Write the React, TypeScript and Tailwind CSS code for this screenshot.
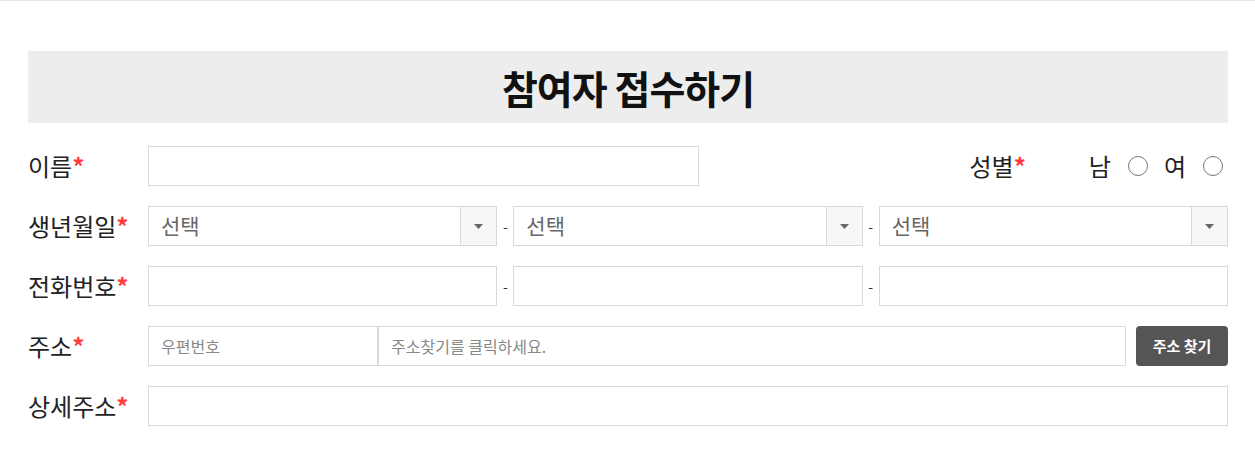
import React from "react";

const font = { fontFamily: '"Noto Sans CJK KR", "Noto Sans", sans-serif' };

function Label({ text }: { text: string }) {
  return (
    <div className="w-[120px] shrink-0 text-[24px] leading-none text-[#222]">
      {text}
      <span className="text-[#ff3b3b] font-bold">*</span>
    </div>
  );
}

function Select() {
  return (
    <div className="flex-1 h-10 flex border border-[#d9d9d9] bg-white">
      <div className="flex-1 flex items-center pl-3 text-[21px] text-[#666]">선택</div>
      <div className="w-9 flex items-center justify-center bg-[#f7f7f7] border-l border-[#d9d9d9]">
        <svg width="9" height="5" viewBox="0 0 9 5">
          <path d="M0 0h9L4.5 5z" fill="#666" />
        </svg>
      </div>
    </div>
  );
}

function Dash() {
  return <span className="w-4 text-center text-[14px] text-[#333]">-</span>;
}

function Radio() {
  return <span className="block w-[20px] h-[20px] rounded-full border border-[#767676] bg-white" />;
}

export default function App() {
  return (
    <div className="min-h-screen bg-white border-t border-[#e2e4e8]" style={font}>
      <div className="w-[1200px] ml-[28px] pt-[50px]">
        {/* Title */}
        <div className="h-[72px] bg-[#ededed] flex items-center justify-center">
          <h1 className="text-[39px] font-bold text-[#111] tracking-tight">참여자 접수하기</h1>
        </div>

        <div className="mt-[23px] flex flex-col gap-5">
          {/* 이름 / 성별 */}
          <div className="flex items-center h-10">
            <Label text="이름" />
            <input className="w-[551px] h-10 border border-[#d9d9d9] outline-none" />
            <div className="ml-auto flex items-center pr-[5px] text-[24px] leading-none text-[#222]">
              <span>
                성별<span className="text-[#ff3b3b] font-bold">*</span>
              </span>
              <span className="ml-[63px]">남</span>
              <span className="ml-[17px]"><Radio /></span>
              <span className="ml-[16px]">여</span>
              <span className="ml-[17px]"><Radio /></span>
            </div>
          </div>

          {/* 생년월일 */}
          <div className="flex items-center h-10">
            <Label text="생년월일" />
            <div className="flex-1 flex items-center">
              <Select />
              <Dash />
              <Select />
              <Dash />
              <Select />
            </div>
          </div>

          {/* 전화번호 */}
          <div className="flex items-center h-10">
            <Label text="전화번호" />
            <div className="flex-1 flex items-center">
              <input className="flex-1 min-w-0 h-10 border border-[#d9d9d9] outline-none" />
              <Dash />
              <input className="flex-1 min-w-0 h-10 border border-[#d9d9d9] outline-none" />
              <Dash />
              <input className="flex-1 min-w-0 h-10 border border-[#d9d9d9] outline-none" />
            </div>
          </div>

          {/* 주소 */}
          <div className="flex items-center h-10">
            <Label text="주소" />
            <input
              placeholder="우편번호"
              className="w-[230px] h-10 border border-[#d9d9d9] px-3 text-[16px] placeholder:text-[#888] outline-none"
            />
            <input
              placeholder="주소찾기를 클릭하세요."
              className="flex-1 min-w-0 h-10 border border-[#d9d9d9] px-3 text-[16px] placeholder:text-[#888] outline-none"
            />
            <button className="ml-[10px] w-[92px] h-10 rounded bg-[#555] text-white text-[15px] font-bold">
              주소 찾기
            </button>
          </div>

          {/* 상세주소 */}
          <div className="flex items-center h-10">
            <Label text="상세주소" />
            <input className="flex-1 h-10 border border-[#d9d9d9] outline-none" />
          </div>
        </div>
      </div>
    </div>
  );
}
